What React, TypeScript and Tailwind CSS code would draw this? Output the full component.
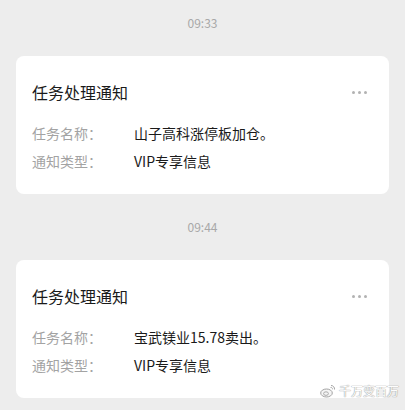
import React from 'react';

const FONT = { fontFamily: '"Noto Sans CJK SC", "Noto Sans", sans-serif' };

const notices = [
  { time: '09:33', task: '山子高科涨停板加仓。', kind: 'VIP专享信息' },
  { time: '09:44', task: '宝武镁业15.78卖出。', kind: 'VIP专享信息' },
];

const MoreDots: React.FC = () => (
  <div className="flex items-center gap-[3px] mr-[2px]">
    <span className="w-[3px] h-[3px] rounded-full bg-[#b2b2b2]"></span>
    <span className="w-[3px] h-[3px] rounded-full bg-[#b2b2b2]"></span>
    <span className="w-[3px] h-[3px] rounded-full bg-[#b2b2b2]"></span>
  </div>
);

const NoticeCard: React.FC<{ task: string; kind: string }> = ({ task, kind }) => (
  <div className="mx-[16px] h-[138px] rounded-[8px] bg-white px-[16px] pt-[24px]">
    <div className="flex items-center justify-between h-[24px]">
      <p className="text-[16px] leading-[24px] text-[#1a1a1a]">任务处理通知</p>
      <div className="pr-[4px]">
        <MoreDots />
      </div>
    </div>
    <div className="mt-[19px] flex flex-col gap-[8px] text-[14px] leading-[20px]">
      <div className="flex">
        <span className="w-[102px] text-[#a3a3a3]">任务名称：</span>
        <span className="text-[#1a1a1a]">{task}</span>
      </div>
      <div className="flex">
        <span className="w-[102px] text-[#a3a3a3]">通知类型：</span>
        <span className="text-[#1a1a1a]">{kind}</span>
      </div>
    </div>
  </div>
);

const App: React.FC = () => {
  return (
    <div className="relative w-[405px] h-[410px] overflow-hidden bg-[#ededed] pt-[15px]" style={FONT}>
      {notices.map((n, idx) => (
        <div key={n.time} className={idx > 0 ? 'mt-[25px]' : ''}>
          <p className="text-center text-[12px] leading-[16px] text-[#a8a8a8]">{n.time}</p>
          <div className="mt-[25px]">
            <NoticeCard task={n.task} kind={n.kind} />
          </div>
        </div>
      ))}

      {/* watermark */}
      <div className="absolute right-[6px] bottom-[12px] flex items-center gap-[3px] opacity-90">
        <svg width="16" height="14" viewBox="0 0 16 14" fill="none">
          <ellipse cx="6.5" cy="9" rx="5.8" ry="4" stroke="#9a9a9a" strokeWidth="1" fill="#f4f4f4" />
          <ellipse cx="6" cy="9.6" rx="2.4" ry="1.8" stroke="#9a9a9a" strokeWidth="0.9" />
          <path d="M11 1.5a3.5 3.5 0 0 1 3.5 4" stroke="#9a9a9a" strokeWidth="1" />
          <path d="M10.5 3.5a1.6 1.6 0 0 1 2 1.8" stroke="#9a9a9a" strokeWidth="0.9" />
        </svg>
        <span
          className="text-[12px] leading-[14px] text-white"
          style={{ textShadow: '0 0 1px #8a8a8a, 0 0 1px #8a8a8a' }}
        >
          千万变百万
        </span>
      </div>
    </div>
  );
};

export default App;
